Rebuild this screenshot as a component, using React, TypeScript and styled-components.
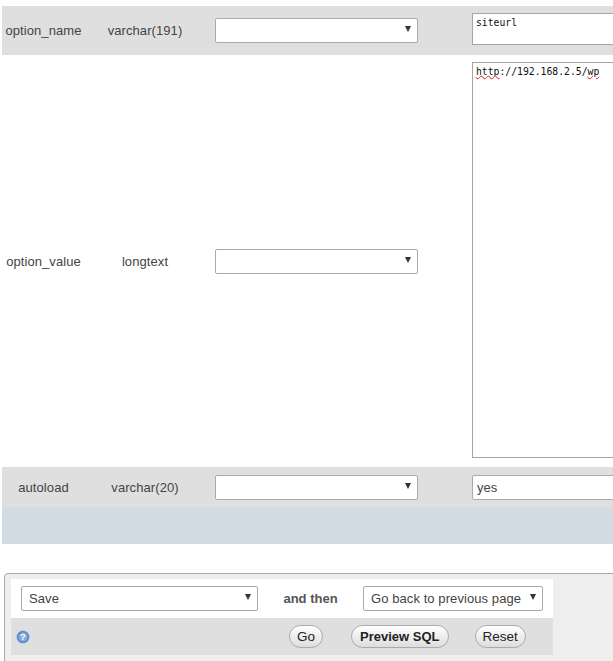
import React from 'react';

import styled, { createGlobalStyle } from 'styled-components';

const GlobalStyle = createGlobalStyle`
  html, body {
    margin: 0;
    padding: 0;
    background: #fff;
    overflow: hidden;
  }
  body {
    font-family: "Liberation Sans", Arial, sans-serif;
    font-size: 13px;
    color: #444;
  }
`;

const Arrow = () => (
  <ArrowIcon width="6" height="6" viewBox="0 0 6 6">
    <path d="M0 0h6L3 6z" fill="#333" />
  </ArrowIcon>
);

const Dropdown = ({ value, width }: { value?: string; width: number }) => (
  <SelectBox $width={width}>
    <span>{value}</span>
    <Arrow />
  </SelectBox>
);

const App = () => (
  <Page>
    <GlobalStyle />
    <FieldRow $height={49} $shaded>
      <NameCell $drop={0}>option_name</NameCell>
      <TypeCell $drop={0}>varchar(191)</TypeCell>
      <FuncCell>
        <Dropdown width={203} />
      </FuncCell>
      <TextBox $height={32} $top={7}>
        siteurl
      </TextBox>
    </FieldRow>
    <FieldRow $height={412}>
      <NameCell $drop={1}>option_value</NameCell>
      <TypeCell $drop={1}>longtext</TypeCell>
      <FuncCell>
        <Dropdown width={203} />
      </FuncCell>
      <TextBox $height={396} $top={7}>
        <Squiggle>http</Squiggle>://192.168.2.5/<Squiggle>wp</Squiggle>
      </TextBox>
    </FieldRow>
    <FieldRow $height={40} $shaded>
      <NameCell $drop={1}>autoload</NameCell>
      <TypeCell $drop={1}>varchar(20)</TypeCell>
      <FuncCell>
        <Dropdown width={203} />
      </FuncCell>
      <PlainInput>yes</PlainInput>
    </FieldRow>
    <BlueBar />
    <Fieldset>
      <SaveRow>
        <Dropdown value="Save" width={237} />
        <AndThen>and then</AndThen>
        <Dropdown value="Go back to previous page" width={180} />
      </SaveRow>
      <ActionRow>
        <HelpIcon width="14" height="14" viewBox="0 0 14 14">
          <circle cx="7" cy="7" r="6.5" fill="#4f7fc0" stroke="#bdd2ec" />
          <circle cx="7" cy="7" r="4.7" fill="#86abdc" />
          <text x="7" y="10.2" textAnchor="middle" fontSize="9.5" fontWeight="700" fill="#fff" fontFamily="Liberation Sans">
            ?
          </text>
        </HelpIcon>
        <Pill $left={259} $size={13.5}>
          Go
        </Pill>
        <Pill $left={28} $size={13} $bold>
          Preview SQL
        </Pill>
        <Pill $left={26} $size={13.5}>
          Reset
        </Pill>
      </ActionRow>
    </Fieldset>
  </Page>
);

export default App;

const Page = styled.div`
  width: 613px;
  height: 661px;
  overflow: hidden;
  padding: 6px 0 0 2px;
  box-sizing: border-box;
`;

const FieldRow = styled.div<{ $height: number; $shaded?: boolean }>`
  display: grid;
  grid-template-columns: 83px 120px 267px 200px;
  align-items: center;
  width: 670px;
  height: ${({ $height }) => $height}px;
  background: ${({ $shaded }) => ($shaded ? '#dfdfdf' : '#fff')};
`;

const NameCell = styled.div<{ $drop: number }>`
  text-align: center;
  white-space: nowrap;
  padding-top: ${({ $drop }) => $drop}px;
  font-size: 13px;
  letter-spacing: 0.08px;
`;

const TypeCell = styled.div<{ $drop: number }>`
  text-align: center;
  white-space: nowrap;
  padding-top: ${({ $drop }) => $drop}px;
  font-size: 13px;
  letter-spacing: 0.08px;
`;

const FuncCell = styled.div`
  padding-left: 10px;
`;

const SelectBox = styled.div<{ $width: number }>`
  display: flex;
  align-items: center;
  justify-content: space-between;
  box-sizing: border-box;
  width: ${({ $width }) => $width}px;
  height: 25px;
  padding: 0 6px 0 7px;
  background: #fff;
  border: 1px solid #aaa;
  border-radius: 2px;
  font-size: 13px;
  letter-spacing: 0.08px;
  white-space: nowrap;
  color: #444;
`;

const ArrowIcon = styled.svg`
  flex: none;
  margin-top: -3px;
`;

const TextBox = styled.div<{ $height: number; $top: number }>`
  align-self: start;
  box-sizing: border-box;
  height: ${({ $height }) => $height}px;
  margin-top: ${({ $top }) => $top}px;
  padding: 2px 3px;
  background: #fff;
  border: 1px solid #a5a5a5;
  font-family: "DejaVu Sans Mono", "Liberation Mono", monospace;
  font-size: 9.75px;
  line-height: 13px;
  color: #111;
`;

const Squiggle = styled.span`
  text-decoration: underline wavy #e01b1b;
  text-decoration-thickness: 1px;
  text-underline-offset: 0;
`;

const PlainInput = styled.div`
  box-sizing: border-box;
  height: 25px;
  line-height: 23px;
  padding-left: 4px;
  background: #fff;
  border: 1px solid #aaa;
  border-radius: 2px 0 0 2px;
  font-size: 13px;
  color: #444;
`;

const BlueBar = styled.div`
  height: 37px;
  width: 611px;
  background: #d3dce3;
`;

const Fieldset = styled.div`
  box-sizing: border-box;
  width: 620px;
  height: 100px;
  margin: 29px 0 0 2px;
  padding: 5px 0 0 6px;
  background: #eee;
  border: 1px solid #aaa;
  border-radius: 4px 0 0 0;
`;

const SaveRow = styled.div`
  display: flex;
  align-items: center;
  box-sizing: border-box;
  width: 542px;
  height: 39px;
  padding-left: 10px;
  background: #fff;
`;

const AndThen = styled.span`
  width: 105px;
  text-align: center;
  font-weight: 700;
  font-size: 13px;
  color: #555;
`;

const ActionRow = styled.div`
  display: flex;
  align-items: center;
  box-sizing: border-box;
  width: 542px;
  height: 37px;
  padding-left: 5px;
  background: #dfdfdf;
`;

const HelpIcon = styled.svg`
  flex: none;
`;

const Pill = styled.div<{ $left: number; $size: number; $bold?: boolean }>`
  box-sizing: border-box;
  height: 23px;
  line-height: 21px;
  margin-left: ${({ $left }) => $left}px;
  padding: 0 ${({ $bold }) => ($bold ? 8 : 7)}px;
  border: 1px solid #aaa;
  border-radius: 12px;
  background: linear-gradient(#fff, #ddd);
  font-size: ${({ $size }) => $size}px;
  font-weight: ${({ $bold }) => ($bold ? 700 : 400)};
  color: #222;
`;
